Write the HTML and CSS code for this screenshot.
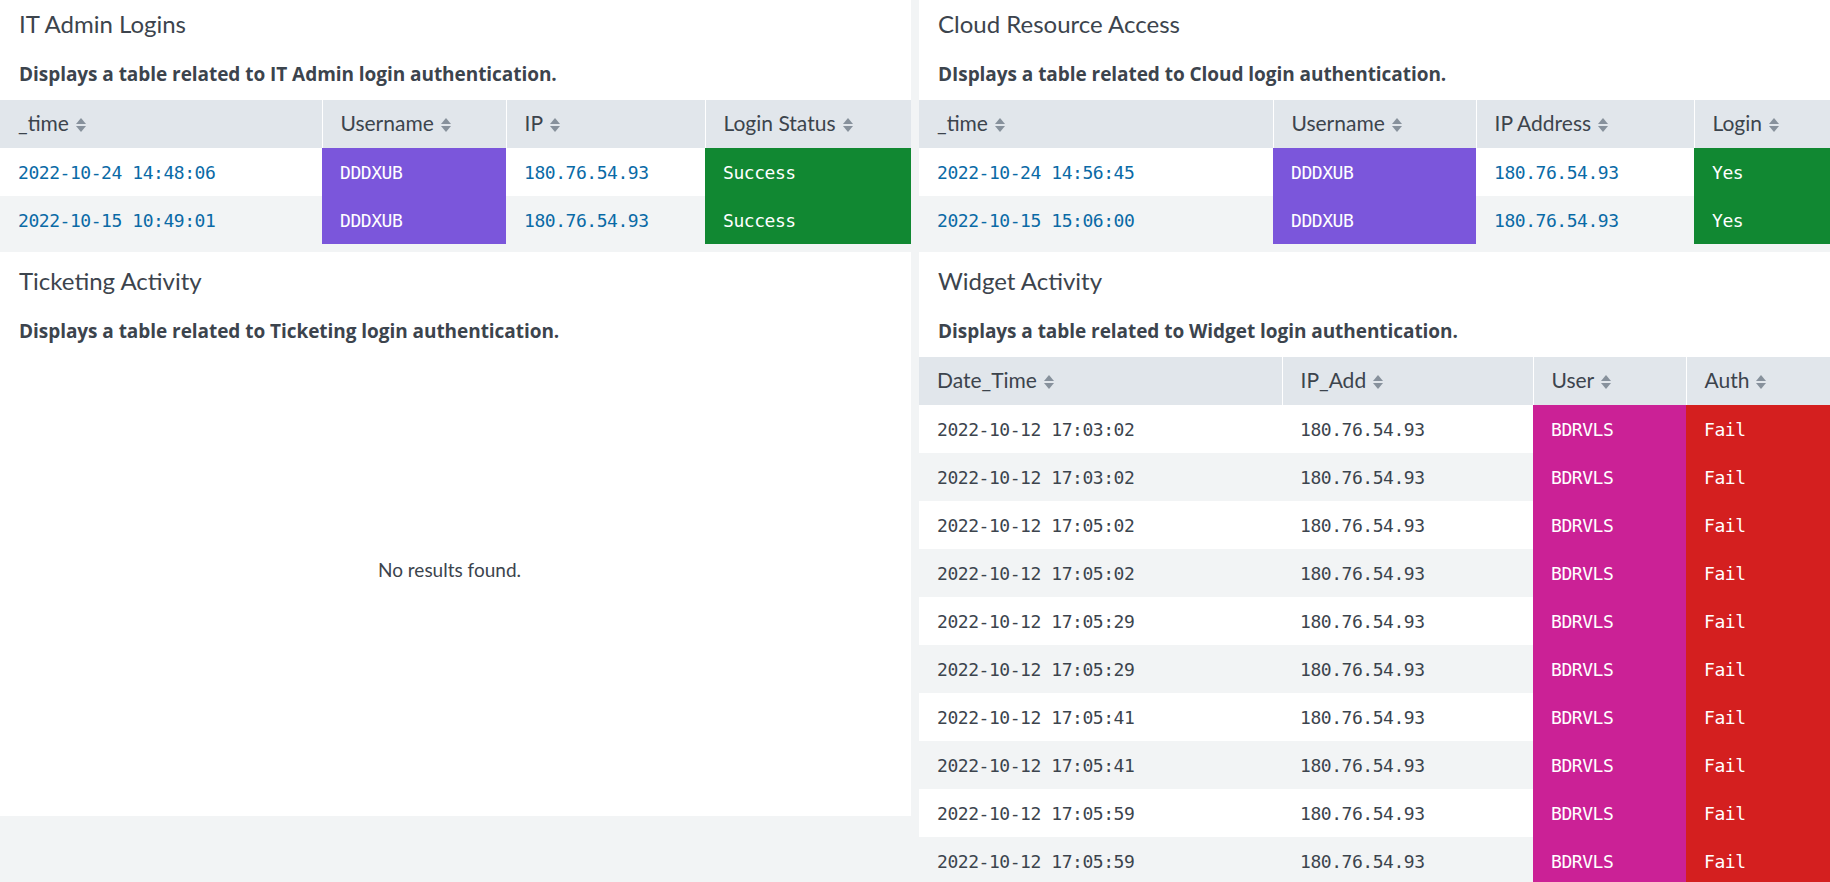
FILE: index.html
```html
<!DOCTYPE html>
<html lang="en">
<head>
<meta charset="utf-8">
<title>Login Dashboard</title>
<link rel="stylesheet" href="styles.css">
</head>
<body>
<svg width="0" height="0" class="defs">
  <defs>
    <symbol id="sort" viewBox="0 0 10 14">
      <path d="M5 0 L10 6 H0 Z"/>
      <path d="M0 8 H10 L5 14 Z"/>
    </symbol>
  </defs>
</svg>
<main class="grid">
  <section class="panel">
    <div class="panel-head">
      <h2 class="title">IT Admin Logins</h2>
      <p class="desc">Displays a table related to IT Admin login authentication.</p>
    </div>
    <table class="tbl link">
      <colgroup><col class="c-322"><col class="c-184"><col class="c-199"><col class="c-206"></colgroup>
      <thead><tr>
        <th>_time<svg class="sort"><use href="#sort"/></svg></th>
        <th>Username<svg class="sort"><use href="#sort"/></svg></th>
        <th>IP<svg class="sort"><use href="#sort"/></svg></th>
        <th>Login Status<svg class="sort"><use href="#sort"/></svg></th>
      </tr></thead>
      <tbody>
        <tr><td>2022-10-24 14:48:06</td><td class="purple">DDDXUB</td><td>180.76.54.93</td><td class="green">Success</td></tr>
        <tr><td>2022-10-15 10:49:01</td><td class="purple">DDDXUB</td><td>180.76.54.93</td><td class="green">Success</td></tr>
      </tbody>
    </table>
  </section>

  <section class="panel">
    <div class="panel-head">
      <h2 class="title">Cloud Resource Access</h2>
      <p class="desc">DIsplays a table related to Cloud login authentication.</p>
    </div>
    <table class="tbl link">
      <colgroup><col class="c-354"><col class="c-203"><col class="c-218"><col class="c-136"></colgroup>
      <thead><tr>
        <th>_time<svg class="sort"><use href="#sort"/></svg></th>
        <th>Username<svg class="sort"><use href="#sort"/></svg></th>
        <th>IP Address<svg class="sort"><use href="#sort"/></svg></th>
        <th>Login<svg class="sort"><use href="#sort"/></svg></th>
      </tr></thead>
      <tbody>
        <tr><td>2022-10-24 14:56:45</td><td class="purple">DDDXUB</td><td>180.76.54.93</td><td class="green">Yes</td></tr>
        <tr><td>2022-10-15 15:06:00</td><td class="purple">DDDXUB</td><td>180.76.54.93</td><td class="green">Yes</td></tr>
      </tbody>
    </table>
  </section>

  <section class="panel">
    <div class="panel-head">
      <h2 class="title">Ticketing Activity</h2>
      <p class="desc">Displays a table related to Ticketing login authentication.</p>
    </div>
    <div class="empty">No results found.</div>
  </section>

  <section class="panel">
    <div class="panel-head">
      <h2 class="title">Widget Activity</h2>
      <p class="desc">Displays a table related to Widget login authentication.</p>
    </div>
    <table class="tbl plain">
      <colgroup><col class="c-363"><col class="c-251"><col class="c-153"><col class="c-144"></colgroup>
      <thead><tr>
        <th>Date_Time<svg class="sort"><use href="#sort"/></svg></th>
        <th>IP_Add<svg class="sort"><use href="#sort"/></svg></th>
        <th>User<svg class="sort"><use href="#sort"/></svg></th>
        <th>Auth<svg class="sort"><use href="#sort"/></svg></th>
      </tr></thead>
      <tbody>
        <tr><td>2022-10-12 17:03:02</td><td>180.76.54.93</td><td class="magenta">BDRVLS</td><td class="red">Fail</td></tr>
        <tr><td>2022-10-12 17:03:02</td><td>180.76.54.93</td><td class="magenta">BDRVLS</td><td class="red">Fail</td></tr>
        <tr><td>2022-10-12 17:05:02</td><td>180.76.54.93</td><td class="magenta">BDRVLS</td><td class="red">Fail</td></tr>
        <tr><td>2022-10-12 17:05:02</td><td>180.76.54.93</td><td class="magenta">BDRVLS</td><td class="red">Fail</td></tr>
        <tr><td>2022-10-12 17:05:29</td><td>180.76.54.93</td><td class="magenta">BDRVLS</td><td class="red">Fail</td></tr>
        <tr><td>2022-10-12 17:05:29</td><td>180.76.54.93</td><td class="magenta">BDRVLS</td><td class="red">Fail</td></tr>
        <tr><td>2022-10-12 17:05:41</td><td>180.76.54.93</td><td class="magenta">BDRVLS</td><td class="red">Fail</td></tr>
        <tr><td>2022-10-12 17:05:41</td><td>180.76.54.93</td><td class="magenta">BDRVLS</td><td class="red">Fail</td></tr>
        <tr><td>2022-10-12 17:05:59</td><td>180.76.54.93</td><td class="magenta">BDRVLS</td><td class="red">Fail</td></tr>
        <tr><td>2022-10-12 17:05:59</td><td>180.76.54.93</td><td class="magenta">BDRVLS</td><td class="red">Fail</td></tr>
      </tbody>
    </table>
  </section>
</main>
</body>
</html>
```

FILE: styles.css
```css
html, body {
  margin: 0;
  padding: 0;
  overflow: hidden;
  background: #f2f4f5;
}
body {
  font-family: Lato, "Open Sans", sans-serif;
  color: #3c444d;
}
.defs { position: absolute; }
.grid {
  display: grid;
  grid-template-columns: 1fr 1fr;
  gap: 8px;
  align-items: start;
  margin-top: -5px;
}
.panel {
  background: #fff;
}
.panel-head {
  height: 105px;
  box-sizing: border-box;
  padding: 16px 19px 0;
}
.title {
  margin: 0;
  font-size: 24px;
  font-weight: 400;
  line-height: 26px;
  color: #3c444d;
}
.desc {
  margin: 26px 0 0;
  font-family: "Open Sans", Lato, sans-serif;
  font-size: 19px;
  font-weight: 700;
  line-height: 22px;
  letter-spacing: -0.05px;
  color: #3c444d;
}
.tbl {
  width: 100%;
  border-collapse: collapse;
  table-layout: fixed;
}
.c-322 { width: 322px; } .c-184 { width: 184px; } .c-199 { width: 199px; } .c-206 { width: 206px; }
.c-354 { width: 354px; } .c-203 { width: 203px; } .c-218 { width: 218px; } .c-136 { width: 136px; }
.c-363 { width: 363px; } .c-251 { width: 251px; } .c-153 { width: 153px; } .c-144 { width: 144px; }
.tbl th {
  height: 48px;
  box-sizing: border-box;
  padding: 0 0 3px 18px;
  background: #e1e6eb;
  border-left: 1px solid #fff;
  text-align: left;
  font-weight: 400;
  font-size: 21px;
  color: #3c444d;
  white-space: nowrap;
}
.tbl th:first-child { border-left: 0; }
.sort {
  width: 10px;
  height: 14px;
  margin-left: 7px;
  vertical-align: -1px;
  fill: #87919c;
}
.tbl tbody tr:nth-child(even) { background: #f2f4f5; }
.tbl td {
  height: 48px;
  padding: 0 0 0 18px;
  font-family: "DejaVu Sans Mono", monospace;
  font-size: 18px;
  letter-spacing: -0.45px;
  white-space: nowrap;
}
.link td { color: #0a6aa6; }
.plain td { color: #3c444d; }
.tbl td.purple { background: #7b56db; color: #fff; }
.tbl td.green { background: #118832; color: #fff; }
.tbl td.magenta { background: #cb2196; color: #fff; }
.tbl td.red { background: #d41f1f; color: #fff; }
.empty {
  height: 459px;
  box-sizing: border-box;
  padding: 200px 12px 0 0;
  text-align: center;
  font-size: 19px;
  line-height: 26px;
  color: #3c444d;
}
```
